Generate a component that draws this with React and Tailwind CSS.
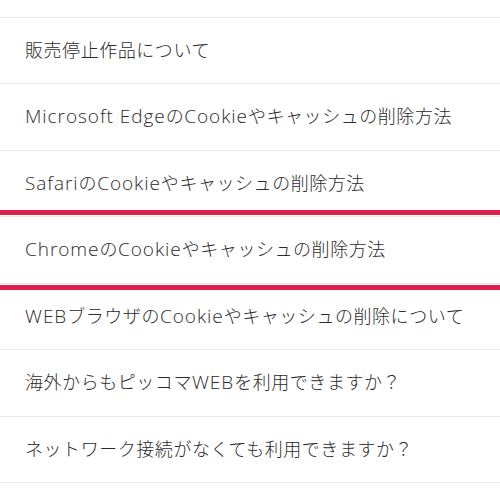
import React from "react";

const items = [
  "販売停止作品について",
  "Microsoft EdgeのCookieやキャッシュの削除方法",
  "SafariのCookieやキャッシュの削除方法",
  "ChromeのCookieやキャッシュの削除方法",
  "WEBブラウザのCookieやキャッシュの削除について",
  "海外からもピッコマWEBを利用できますか？",
  "ネットワーク接続がなくても利用できますか？",
];

function Runs({ text }) {
  const parts = text.split(/([A-Za-z ]+)/).filter(Boolean);
  return parts.map((p, i) =>
    /^[A-Za-z ]+$/.test(p) ? (
      <span key={i} className="text-[19px] tracking-[0.95px]">
        {p}
      </span>
    ) : (
      <span key={i} className="tracking-[0.55px]">
        {p}
      </span>
    )
  );
}

export default function App() {
  return (
    <div
      className="relative w-[500px] h-[500px] overflow-hidden bg-white text-[#2b2b2b]"
      style={{ fontFamily: '"Open Sans", "Noto Sans CJK JP", sans-serif' }}
    >
      <div className="h-[16.5px]" />
      <ul>
        {items.map((t) => (
          <li
            key={t}
            className="flex h-[66.5px] items-center whitespace-pre border-t border-[#e8e8e8] pl-[25px] text-[18px] font-light leading-none"
          >
            <span>
              <Runs text={t} />
            </span>
          </li>
        ))}
        <li className="h-[66.5px] border-t border-[#e8e8e8]" />
      </ul>
      <div className="pointer-events-none absolute left-0 right-0 top-[209.5px] h-[80px] border-y-[5px] border-[#dc1f4b]" />
    </div>
  );
}
